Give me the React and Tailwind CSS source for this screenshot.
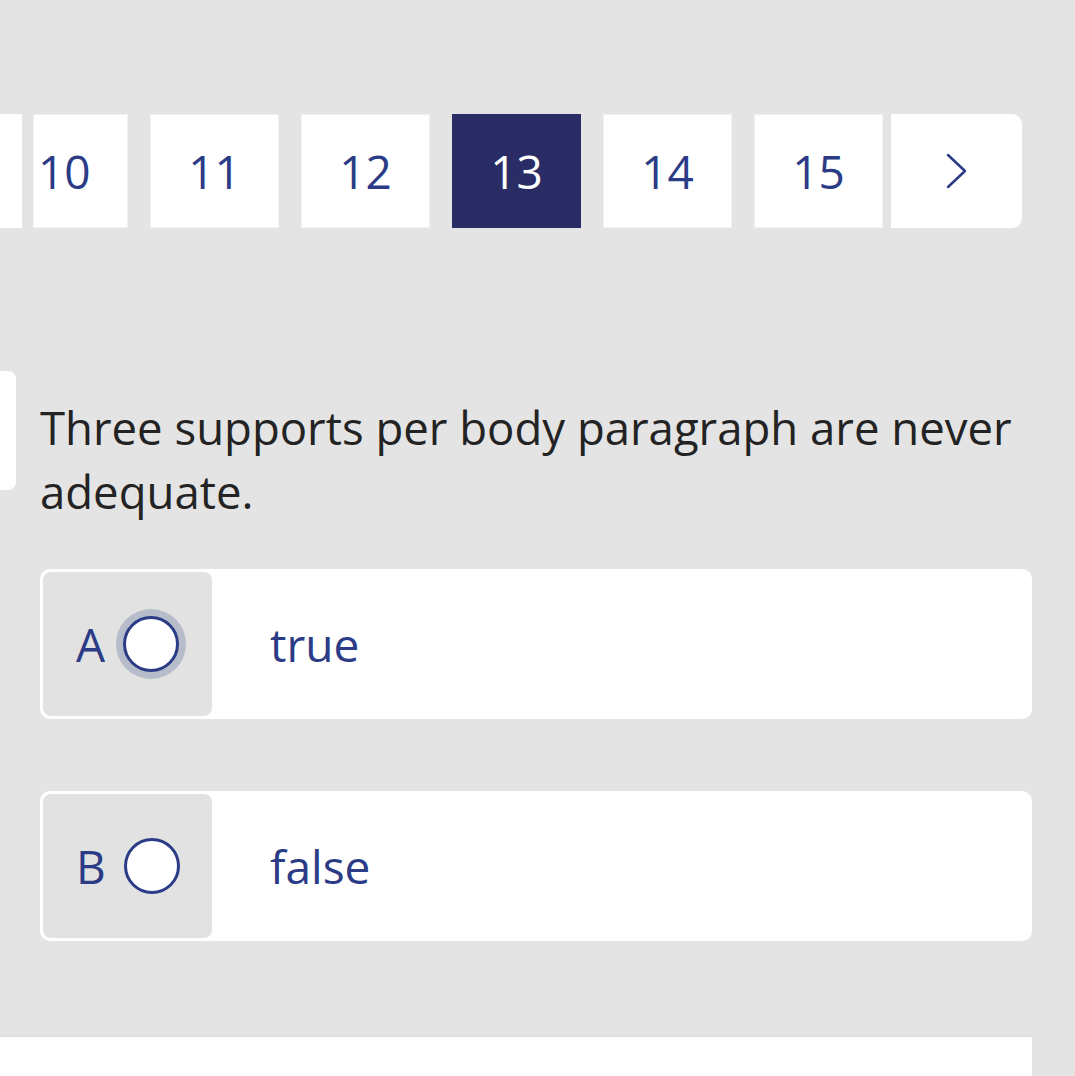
import React from "react";

const font = { fontFamily: '"Open Sans", "Noto Sans", sans-serif' };

function Tile({ label, className = "", active = false }) {
  return (
    <div
      className={`h-[114px] shrink-0 flex items-center justify-center text-[46px] ${
        active ? "bg-[#2a2c66] text-white" : "bg-white text-[#2b3b86] border border-[#f2f2f2]"
      } ${className}`}
    >
      {label}
    </div>
  );
}

function Radio({ focused }) {
  return (
    <div className="relative w-[72px] h-[72px] flex items-center justify-center">
      {focused && <div className="absolute inset-[1px] rounded-full bg-[#b7bccb]" />}
      <div className="relative w-[56px] h-[56px] rounded-full bg-white border-[3px] border-[#2b3b86]" />
    </div>
  );
}

function Option({ letter, text, focused }) {
  return (
    <div className="ml-[40px] w-[992px] h-[150px] bg-white rounded-[10px] p-[3px] flex">
      <div className="w-[169px] h-full rounded-[8px] bg-[#e2e2e2] flex items-center pl-[33px] gap-[10px]">
        <span className="text-[46px] text-[#2b3b86] leading-none">{letter}</span>
        <Radio focused={focused} />
      </div>
      <div className="flex items-center pl-[58px] text-[46px] text-[#2b3b86]">{text}</div>
    </div>
  );
}

export default function App() {
  return (
    <div className="w-[1075px] h-[1076px] overflow-hidden bg-[#e4e4e4]" style={font}>
      <div className="pt-[114px] flex">
        <div className="w-[22px] h-[114px] bg-white shrink-0" />
        <Tile label="10" className="ml-[11px] w-[95px] !justify-start pl-[4px]" />
        <Tile label="11" className="ml-[22px] w-[129px]" />
        <Tile label="12" className="ml-[22px] w-[129px]" />
        <Tile label="13" active className="ml-[22px] w-[129px]" />
        <Tile label="14" className="ml-[22px] w-[129px]" />
        <Tile label="15" className="ml-[22px] w-[129px]" />
        <div className="ml-[8px] w-[131px] h-[114px] bg-white rounded-r-[10px] flex items-center justify-center text-[#2b3b86]">
          <svg width="28" height="40" viewBox="0 0 28 40" fill="none">
            <path d="M5 4 L22 20 L5 36" stroke="#2b3b86" strokeWidth="2.5" strokeLinecap="round" strokeLinejoin="round" />
          </svg>
        </div>
      </div>

      <div className="mt-[143px] flex items-start">
        <div className="w-[16px] h-[119px] bg-white rounded-r-[8px] shrink-0" />
        <p className="ml-[24px] mt-[24px] w-[1010px] text-[45.5px] leading-[64px] text-[#232323]">
          Three supports per body paragraph are never adequate.
        </p>
      </div>

      <div className="mt-[46px]">
        <Option letter="A" text="true" focused />
      </div>
      <div className="mt-[72px]">
        <Option letter="B" text="false" />
      </div>

      <div className="mt-[95px] w-[1032px] h-[60px] bg-white border-t border-[#dcdcdc]" />
    </div>
  );
}
